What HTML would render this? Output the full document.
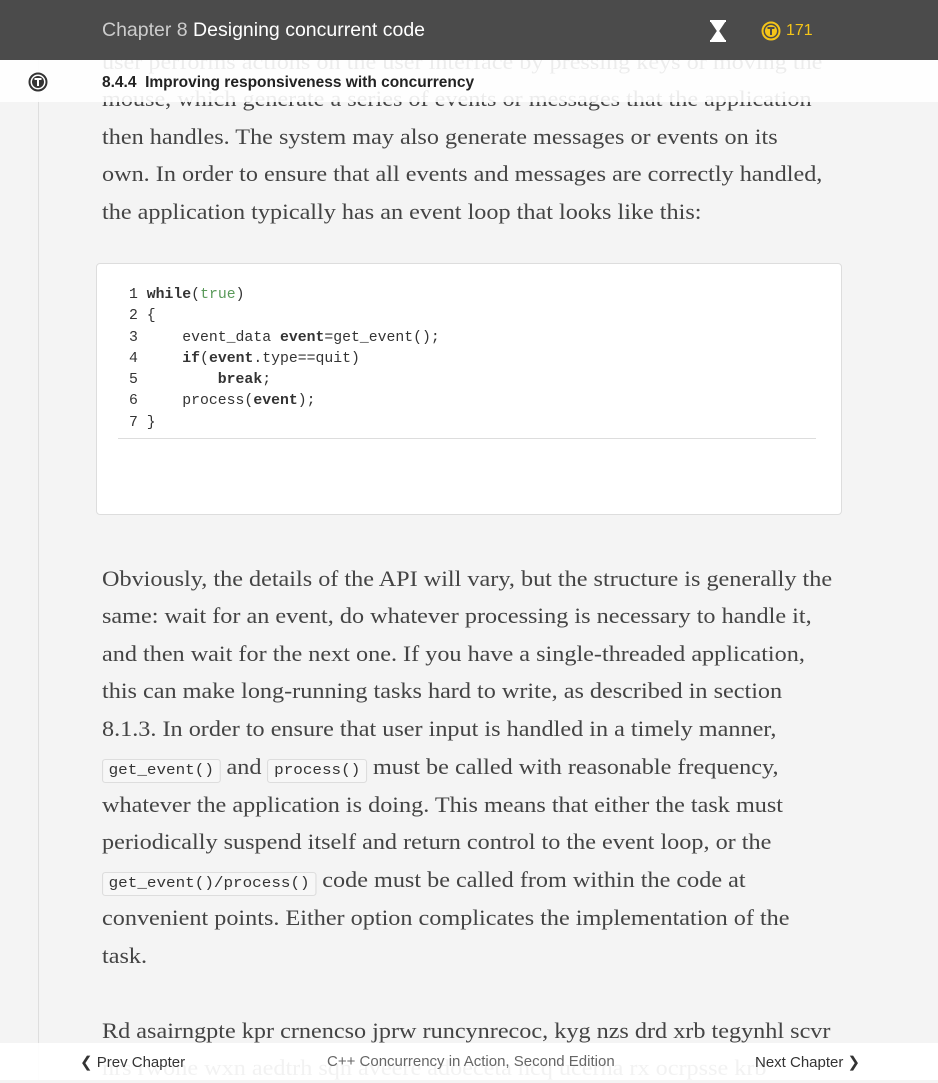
<!DOCTYPE html>
<html><head><meta charset="utf-8"><style>
*{margin:0;padding:0;box-sizing:border-box}
body{width:938px;height:1080px;overflow:hidden;background:#f4f4f4;position:relative;font-family:"Liberation Serif",serif}
.vl{position:absolute;left:38px;top:0;width:1px;height:1080px;background:#dedede}
.l{position:absolute;left:102px;font-size:22px;color:#444;white-space:nowrap;line-height:30px;height:30px;transform:scaleX(1.1);transform-origin:0 0}
.ic{font-family:"Liberation Mono",monospace;font-size:14.5px;background:#f7f7f7;border:1px solid #ddd;border-radius:3px;padding:3px 5px;color:#333}
.top{position:absolute;left:0;top:0;width:938px;height:60px;background:#4b4b4b}
.top .t{position:absolute;left:102px;top:19px;font-family:"Liberation Sans",sans-serif;font-size:19.5px;color:#fff}
.sub{position:absolute;left:0;top:60px;width:938px;height:42px;background:rgba(255,255,255,.9)}
.sub .t{position:absolute;left:102px;top:14px;font-family:"Liberation Sans",sans-serif;font-size:15.5px;color:#222;font-weight:bold}
.code{position:absolute;left:96px;top:263px;width:746px;height:252px;background:#fff;border:1px solid #ddd;border-radius:4px}
.code pre{position:absolute;left:32px;top:21px;font-family:"Liberation Mono",monospace;font-size:14.8px;line-height:21.3px;color:#333}
.code .hr{position:absolute;left:21px;top:174px;width:698px;height:1px;background:#ddd}
.foot{position:absolute;left:0;top:1043px;width:938px;height:37px;background:rgba(255,255,255,.93);font-family:"Liberation Sans",sans-serif;font-size:15px}
</style></head><body>
<div class="vl"></div>
<div class="l" style="top:47px">user performs actions on the user interface by pressing keys or moving the</div>
<div class="l" style="top:84px">mouse, which generate a series of events or messages that the application</div>
<div class="l" style="top:122px">then handles. The system may also generate messages or events on its</div>
<div class="l" style="top:159px">own. In order to ensure that all events and messages are correctly handled,</div>
<div class="l" style="top:197px">the application typically has an event loop that looks like this:</div>
<div class="code"><pre>1 <b>while</b>(<span style="color:#5a9a5a">true</span>)
2 {
3     event_data <b>event</b>=get_event();
4     <b>if</b>(<b>event</b>.type==quit)
5         <b>break</b>;
6     process(<b>event</b>);
7 }</pre><div class="hr"></div></div>
<div class="l" style="top:564px">Obviously, the details of the API will vary, but the structure is generally the</div>
<div class="l" style="top:601px">same: wait for an event, do whatever processing is necessary to handle it,</div>
<div class="l" style="top:639px">and then wait for the next one. If you have a single-threaded application,</div>
<div class="l" style="top:676px">this can make long-running tasks hard to write, as described in section</div>
<div class="l" style="top:714px">8.1.3. In order to ensure that user input is handled in a timely manner,</div>
<div class="l" style="top:752px"><span class="ic">get_event()</span> and <span class="ic">process()</span> must be called with reasonable frequency,</div>
<div class="l" style="top:790px">whatever the application is doing. This means that either the task must</div>
<div class="l" style="top:827px">periodically suspend itself and return control to the event loop, or the</div>
<div class="l" style="top:865px"><span class="ic">get_event()/process()</span> code must be called from within the code at</div>
<div class="l" style="top:903px">convenient points. Either option complicates the implementation of the</div>
<div class="l" style="top:941px">task.</div>
<div class="l" style="top:1016px">Rd asairngpte kpr crnencso jprw runcynrecoc, kyg nzs drd xrb tegynhl scvr</div>
<div class="l" style="top:1053px">nrs rwohe wxn aedtrh sqn aveere adoeceta ncq ucerha rx ocrpsse krb</div>
<div class="top"><div class="t"><span style="color:#ccc">Chapter 8</span> Designing concurrent code</div>
<svg style="position:absolute;left:708px;top:20px" width="20" height="22" viewBox="0 0 20 22"><path d="M2 1h16M2 21h16M4 2L16 20M16 2L4 20M4 2h12L10 11zM10 11L4 20h12z" stroke="#fff" stroke-width="2" fill="#fff"/></svg>
<svg style="position:absolute;left:761px;top:21px" width="20" height="20" viewBox="0 0 20 20"><circle cx="10" cy="10" r="8.5" fill="none" stroke="#f5c518" stroke-width="2"/><circle cx="10" cy="10" r="6" fill="#f5c518"/><path d="M6.5 7h7M10 7v7" stroke="#4b4b4b" stroke-width="2"/></svg>
<div style="position:absolute;left:786px;top:22px;font-family:'Liberation Sans',sans-serif;font-size:16px;color:#f5c518">171</div></div>
<div class="sub">
<svg style="position:absolute;left:28px;top:12px" width="20" height="20" viewBox="0 0 20 20"><circle cx="10" cy="10" r="8.5" fill="none" stroke="#333" stroke-width="2"/><circle cx="10" cy="10" r="6" fill="#333"/><path d="M6.5 7h7M10 7v7" stroke="#fff" stroke-width="2"/></svg>
<div class="t">8.4.4&nbsp; Improving responsiveness with concurrency</div></div>
<div class="foot">
<div style="position:absolute;left:80px;top:10px;color:#333">&#10094; Prev Chapter</div>
<div style="position:absolute;left:327px;top:10px;color:#666">C++ Concurrency in Action, Second Edition</div>
<div style="position:absolute;left:755px;top:10px;color:#333">Next Chapter &#10095;</div>
</div>
</body></html>
